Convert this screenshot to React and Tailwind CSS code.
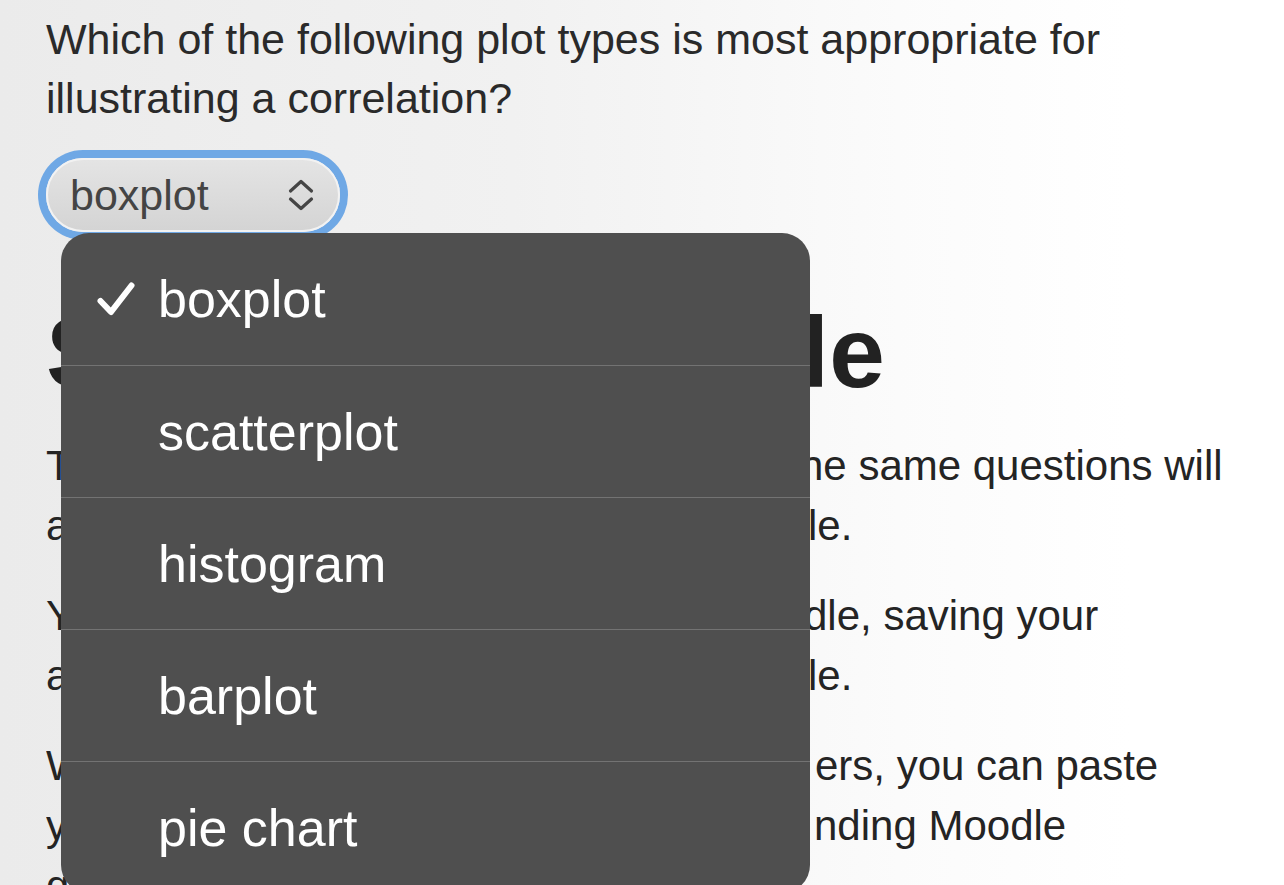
import React from "react";

const font = { fontFamily: '"Liberation Sans", Arial, Helvetica, sans-serif' };

function Line({ w, hidden, shown }) {
  return (
    <div className="flex whitespace-nowrap">
      <span className="shrink-0 overflow-hidden" style={{ width: w }}>{hidden}</span>
      <span>{shown}</span>
    </div>
  );
}

function Chevrons() {
  return (
    <svg width="26" height="32" viewBox="0 0 26 32" fill="none" stroke="#454545" strokeWidth="3.2" strokeLinecap="round" strokeLinejoin="round">
      <path d="M2.5 12 L13 2.5 L23.5 12" />
      <path d="M2.5 20 L13 29.5 L23.5 20" />
    </svg>
  );
}

function Check() {
  return (
    <svg width="38" height="34" viewBox="0 0 38 34" fill="none" stroke="#ffffff" strokeWidth="6" strokeLinecap="round" strokeLinejoin="round">
      <path d="M3.5 19 L14 30 L34.5 3.5" />
    </svg>
  );
}

const options = ["boxplot", "scatterplot", "histogram", "barplot", "pie chart"];

export default function App() {
  return (
    <div
      className="relative w-[1284px] h-[885px] overflow-hidden bg-[linear-gradient(to_right,#ebebeb_0%,#f1f1f1_40%,#fbfbfb_70%,#ffffff_88%)] text-[#242424]"
      style={font}
    >
      <div className="pl-[46px] pt-[10px]">
        <p className="text-[43px] leading-[59px] text-[#2a2a2a]">
          Which of the following plot types is most appropriate for
          <br />
          illustrating a correlation?
        </p>

        <div className="mt-[30px] flex h-[74px] w-[294px] items-center justify-between rounded-full border-2 border-[#f2f2f2] bg-[linear-gradient(to_bottom,#e4e4e4,#d4d4d4)] pl-[22px] pr-[24px] ring-8 ring-[#6fa8e5]">
          <span className="text-[43px] leading-none text-[#444444]">boxplot</span>
          <Chevrons />
        </div>

        <h1 className="mt-[60px] text-[100px] font-bold leading-[120px] text-[#222222] whitespace-nowrap">
          Submit to Moodle
        </h1>

        <div className="mt-[24px] text-[42px] leading-[60px] text-[#242424]">
          <div className="mb-[30px]">
            <Line w={754} hidden="The questions on this page are identical, t" shown="he same questions will" />
            <Line w={762} hidden="appear in the corresponding quiz on Moodle Moodle" shown="le." />
          </div>
          <div className="mb-[30px]">
            <Line w={758} hidden="You can work on the questions here or in Moo" shown="dle, saving your" />
            <Line w={762} hidden="answers here does not save them in Moodle Moodle" shown="le." />
          </div>
          <div>
            <Line w={769} hidden="When you are happy with your answ" shown="ers, you can paste" />
            <Line w={768} hidden="your answers into the correspo correspo" shown="nding Moodle" />
            <Line w={766} hidden="questions and submit them there." shown="" />
          </div>
        </div>
      </div>

      <div className="absolute left-[61px] top-[233px] w-[749px] overflow-hidden rounded-[28px] bg-[#4f4f4f] text-white">
        {options.map((o, i) => (
          <div
            key={o}
            className={`flex h-[132px] items-center pl-[36px] ${i > 0 ? "border-t border-[#737373]" : ""}`}
          >
            <div className="flex w-[61px] shrink-0 items-center">{i === 0 ? <Check /> : null}</div>
            <span className="text-[52px] leading-none">{o}</span>
          </div>
        ))}
      </div>
    </div>
  );
}
